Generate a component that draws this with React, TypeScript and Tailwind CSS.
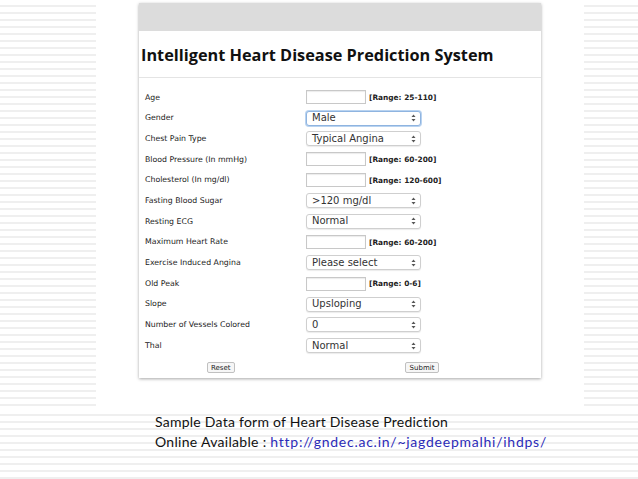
import React from "react";

const stripes =
  "bg-[repeating-linear-gradient(to_bottom,#ffffff_0px,#ffffff_5px,#efefef_5px,#efefef_7px)]";

type Row =
  | { label: string; kind: "input"; range: string }
  | { label: string; kind: "select"; value: string; focus?: boolean };

const rows: Row[] = [
  { label: "Age", kind: "input", range: "[Range: 25-110]" },
  { label: "Gender", kind: "select", value: "Male", focus: true },
  { label: "Chest Pain Type", kind: "select", value: "Typical Angina" },
  { label: "Blood Pressure (In mmHg)", kind: "input", range: "[Range: 60-200]" },
  { label: "Cholesterol (In mg/dl)", kind: "input", range: "[Range: 120-600]" },
  { label: "Fasting Blood Sugar", kind: "select", value: ">120 mg/dl" },
  { label: "Resting ECG", kind: "select", value: "Normal" },
  { label: "Maximum Heart Rate", kind: "input", range: "[Range: 60-200]" },
  { label: "Exercise Induced Angina", kind: "select", value: "Please select" },
  { label: "Old Peak", kind: "input", range: "[Range: 0-6]" },
  { label: "Slope", kind: "select", value: "Upsloping" },
  { label: "Number of Vessels Colored", kind: "select", value: "0" },
  { label: "Thal", kind: "select", value: "Normal" },
];

function Arrows() {
  return (
    <svg width="5" height="8" viewBox="0 0 5 8" className="shrink-0">
      <path d="M0.5 3 L2.5 0.5 L4.5 3 Z" fill="#555" />
      <path d="M0.5 5 L2.5 7.5 L4.5 5 Z" fill="#555" />
    </svg>
  );
}

export default function App() {
  return (
    <div className="w-[638px] h-[479px] flex flex-col bg-white overflow-hidden">
      <div className="flex h-[409px]">
        <div className={`w-[96px] ${stripes}`} />
        <div className="flex-1 bg-white pt-[3px] pl-[43px]">
          <div className="w-[402px] h-[375px] bg-white flex flex-col shadow-[0_1px_3px_rgba(0,0,0,0.35)]">
            <div className="h-[28px] bg-[#dcdcdc]" />
            <div className="h-[47px] flex items-center pl-[2px] pt-[2px] border-b border-[#e4e4e4]">
              <span className="text-[16.3px] font-bold text-[#111] [font-family:'Open_Sans',sans-serif]">
                Intelligent Heart Disease Prediction System
              </span>
            </div>
            <div className="flex flex-col pt-[9px] pl-[6px] [font-family:'DejaVu_Sans',sans-serif]">
              {rows.map((r) => (
                <div key={r.label} className="h-[20.7px] flex items-center">
                  <div className="w-[161px] text-[7.8px] text-[#222]">{r.label}</div>
                  {r.kind === "input" ? (
                    <div className="flex items-center">
                      <div className="w-[60px] h-[14px] border border-[#c8c8c8] bg-white shadow-[inset_0_1px_1px_rgba(0,0,0,0.08)]" />
                      <span className="ml-[3px] text-[7.4px] font-bold text-[#222]">{r.range}</span>
                    </div>
                  ) : (
                    <div
                      className={`w-[115px] h-[15px] rounded-[3px] bg-white flex items-center justify-between pl-[5px] pr-[4px] border ${
                        r.focus
                          ? "border-[#8fb4e0] shadow-[0_0_0_1px_#b9d3f0]"
                          : "border-[#cfcfcf] shadow-[0_1px_1px_rgba(0,0,0,0.08)]"
                      }`}
                    >
                      <span className="text-[10px] text-[#333] leading-none">{r.value}</span>
                      <Arrows />
                    </div>
                  )}
                </div>
              ))}
              <div className="flex mt-[6px] h-[12px] items-center">
                <div className="ml-[62px] px-[3px] h-[11px] flex items-center border border-[#c0c0c0] rounded-[2px] bg-[#f6f6f6] text-[7px] text-[#222]">
                  Reset
                </div>
                <div className="ml-[170px] px-[4px] h-[11px] flex items-center border border-[#c0c0c0] rounded-[2px] bg-[#f6f6f6] text-[7px] text-[#222]">
                  Submit
                </div>
              </div>
            </div>
          </div>
        </div>
        <div className={`w-[54px] ${stripes}`} />
      </div>
      <div className={`flex-1 ${stripes} pl-[155px] pt-[3px] [font-family:'Lato',sans-serif] text-[14px] leading-[20px] text-[#111]`}>
        <div className="tracking-[0.25px]">Sample Data form of Heart Disease Prediction</div>
        <div className="tracking-[0.3px]">
          Online Available :{" "}
          <span className="text-[#2b2bb8] tracking-[0.75px]">http://gndec.ac.in/~jagdeepmalhi/ihdps/</span>
        </div>
      </div>
    </div>
  );
}
